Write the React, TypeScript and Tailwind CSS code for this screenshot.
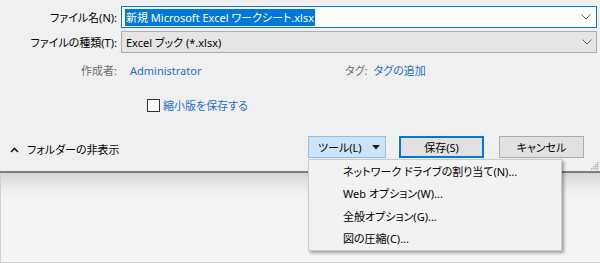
import React from "react";

const FONT = "font-['Noto_Sans','Noto_Sans_CJK_JP',sans-serif] [font-feature-settings:'palt']";

const MENU_ITEMS = [
  "ネットワーク ドライブの割り当て(N)...",
  "Web オプション(W)...",
  "全般オプション(G)...",
  "図の圧縮(C)...",
];

const ChevronDown = () => (
  <svg width="10" height="6" viewBox="0 0 10 6">
    <path d="M0.5 0.5 L5 5 L9.5 0.5" fill="none" stroke="#5f5f5f" strokeWidth="1" />
  </svg>
);

const Row = ({ label, children }: { label: string; children: React.ReactNode }) => (
  <div className="flex h-[22px] items-center">
    <div className="w-[117px] shrink-0 text-right">{label}</div>
    <div className="ml-[4px] flex-1 h-full">{children}</div>
  </div>
);

const Grip = () => (
  <svg width="8" height="8" viewBox="0 0 8 8" className="absolute right-[1px] top-[162px]">
    {[
      [6, 0],
      [4, 2],
      [6, 2],
      [2, 4],
      [4, 4],
      [6, 4],
      [0, 6],
      [2, 6],
      [4, 6],
      [6, 6],
    ].map(([x, y]) => (
      <rect key={`${x}-${y}`} x={x} y={y} width="1.5" height="1.5" fill="#b5b5b5" />
    ))}
  </svg>
);

export default function App() {
  return (
    <div className={`relative w-[600px] h-[263px] overflow-hidden bg-[#f3f3f3] text-[11px] leading-none whitespace-nowrap text-black ${FONT}`}>
      <div className="relative h-[173px] bg-[#f0f0f0] border-b-2 border-[#7c7c7c] pt-[6px] pr-[3px] flex flex-col">
        <Row label="ファイル名(N):">
          <div className="h-full bg-white border border-[#0078d7] flex items-center pl-[3px] pr-[5px]">
            <span className="bg-[#0078d7] text-white px-[1px] py-[3px]">新規 Microsoft Excel ワークシート.xlsx</span>
            <span className="ml-auto">
              <ChevronDown />
            </span>
          </div>
        </Row>
        <div className="h-[3px]" />
        <Row label="ファイルの種類(T):">
          <div className="h-full bg-[#e5e5e5] border border-[#adadad] flex items-center pl-[4px] pr-[4px]">
            <span>Excel ブック (*.xlsx)</span>
            <span className="ml-auto">
              <ChevronDown />
            </span>
          </div>
        </Row>

        <div className="mt-[9px] flex h-[16px] items-center">
          <div className="w-[117px] shrink-0 text-right text-[#6d6d6d]">作成者:</div>
          <div className="ml-[13px] w-[215px] text-[#1e6ec2]">Administrator</div>
          <div className="text-[#6d6d6d]">タグ:</div>
          <div className="ml-[6px] text-[#1e6ec2]">タグの追加</div>
        </div>

        <div className="mt-[19px] flex h-[16px] items-center pl-[147px]">
          <div className="w-[13px] h-[13px] border border-[#333333] bg-white" />
          <div className="ml-[3px] text-[#1e6ec2]">縮小版を保存する</div>
        </div>

        <div className="mt-[23px] flex h-[22px] items-center">
          <div className="w-[298px] flex items-center pl-[10px] mt-[5px]">
            <svg width="9" height="6" viewBox="0 0 9 6">
              <path d="M1 5 L4.5 1.5 L8 5" fill="none" stroke="#1b1b1b" strokeWidth="1.6" />
            </svg>
            <span className="ml-[8px]">フォルダーの非表示</span>
          </div>
          <div className="ml-[10px] flex h-full">
            <div className="w-[78px] h-full bg-[#cce4f7] border border-[#8fc0ea] flex items-center pl-[9px]">
              <span>ツール(L)</span>
              <svg width="8" height="5" viewBox="0 0 8 5" className="ml-auto mr-[5px]">
                <path d="M0 0 L8 0 L4 4.5 Z" fill="#1b1b1b" />
              </svg>
            </div>
            <div className="ml-[13px] w-[85px] h-full bg-[#e1e1e1] border-2 border-[#0078d7] flex items-center justify-center">
              保存(S)
            </div>
            <div className="ml-[15px] w-[85px] h-full bg-[#e1e1e1] border border-[#adadad] flex items-center justify-center">
              キャンセル
            </div>
          </div>
        </div>
        <Grip />
      </div>

      <div className="h-[90px] border-l border-b border-[#cfcfcf] bg-[linear-gradient(#d6d6d6,#f4f4f4_22px)]" />

      <div className="absolute left-[308px] top-[159px] w-[254px] bg-[#f2f2f2] border border-[#cccccc] shadow-[2px_2px_3px_rgba(0,0,0,0.35)] flex flex-col">
        {MENU_ITEMS.map((item) => (
          <div key={item} className="h-[22.5px] flex items-center pl-[34px]">
            {item}
          </div>
        ))}
      </div>
    </div>
  );
}
